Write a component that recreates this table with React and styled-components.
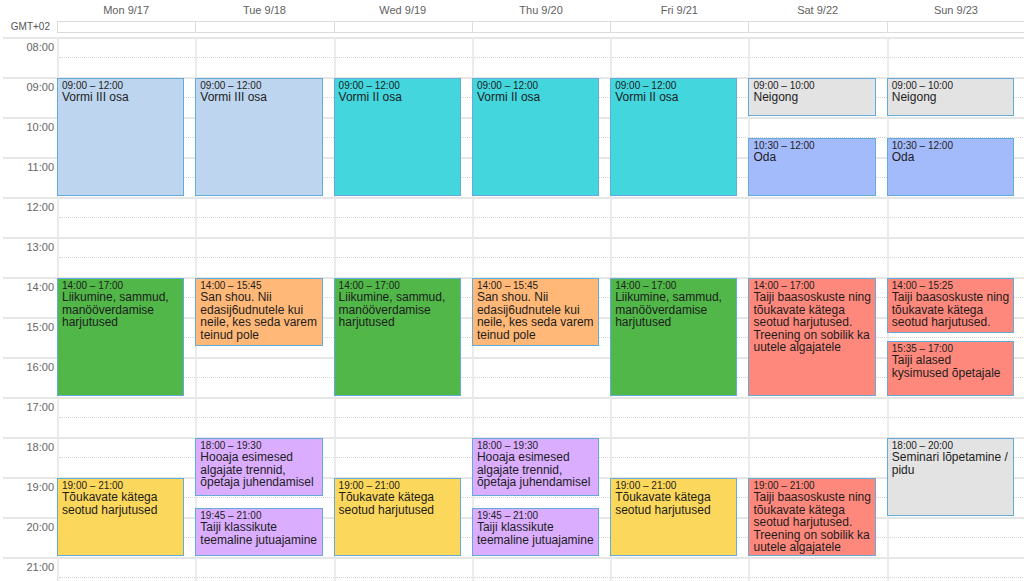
import React from "react";
import styled, { createGlobalStyle } from "styled-components";

const GlobalStyle = createGlobalStyle`
  html, body { margin: 0; padding: 0; background: #fff; overflow: hidden; }
  body { font-family: "Liberation Sans", Arial, sans-serif; color: #222; }
  * { box-sizing: border-box; }
`;

const COLS = "54px repeat(7, 138.3px)";

const Calendar = styled.div`
  width: 1025px;
  padding-left: 3px;
`;

const HeaderRow = styled.div`
  display: grid;
  grid-template-columns: ${COLS};
  height: 21px;
  align-items: center;
`;

const DayLabel = styled.div`
  text-align: center;
  font-size: 11px;
  color: #5f5f5f;
  padding-bottom: 2px;
`;

const AllDayRow = styled.div`
  display: grid;
  grid-template-columns: ${COLS};
  height: 16px;
`;

const ZoneLabel = styled.div`
  font-size: 10px;
  color: #555;
  text-align: right;
  padding-right: 7px;
  line-height: 12px;
`;

const AllDayCell = styled.div`
  height: 12px;
  border-top: 1px solid #dcdcdc;
  border-bottom: 1px solid #dcdcdc;
  border-left: 1px solid #dcdcdc;
`;

const Body = styled.div`
  display: grid;
  grid-template-columns: ${COLS};
`;

const Gutter = styled.div`
  display: flex;
  flex-direction: column;
`;

const HourLabel = styled.div`
  height: 40px;
  border-top: 2px solid #e6e6e6;
  font-size: 11px;
  color: #666;
  text-align: right;
  padding: 2px 3px 0 0;
  line-height: 13px;
`;

const DayColumn = styled.div`
  position: relative;
  display: flex;
  flex-direction: column;
`;

const Slot = styled.div`
  height: 40px;
  border-top: 2px solid #e6e6e6;
  border-left: 2px solid #ebebeb;
`;

const HalfLine = styled.div`
  height: 19px;
  border-bottom: 1px dotted #d4d4d4;
`;

const Event = styled.div`
  position: absolute;
  left: 0;
  width: 92%;
  background: ${(p) => p.$bg};
  border: 1px solid #63acd9;
  padding: 2px 3px 0 4px;
  overflow: hidden;
  color: #1d1d1d;
`;

const EventTime = styled.div`
  font-size: 10px;
  line-height: 10px;
`;

const EventTitle = styled.div`
  font-size: 12px;
  line-height: 12.5px;
`;

const C = {
  lightblue: "#bdd5ee",
  cyan: "#44d6dd",
  gray: "#e3e3e3",
  peri: "#a4bbfb",
  green: "#51b749",
  orange: "#ffb878",
  salmon: "#ff887c",
  purple: "#dbadff",
  yellow: "#fbd75b",
};

const LIIK = "Liikumine, sammud, manööverdamise harjutused";
const TOUK = "Tõukavate kätega seotud harjutused";
const SAN = "San shou. Nii edasij6udnutele kui neile, kes seda varem teinud pole";
const HOO = "Hooaja esimesed algajate trennid, õpetaja juhendamisel";
const KLA = "Taiji klassikute teemaline jutuajamine";
const BAAS = "Taiji baasoskuste ning tõukavate kätega seotud harjutused. Treening on sobilik ka uutele algajatele";

const days = [
  {
    label: "Mon 9/17",
    events: [
      ["09:00", "12:00", "Vormi III osa", C.lightblue],
      ["14:00", "17:00", LIIK, C.green],
      ["19:00", "21:00", TOUK, C.yellow],
    ],
  },
  {
    label: "Tue 9/18",
    events: [
      ["09:00", "12:00", "Vormi III osa", C.lightblue],
      ["14:00", "15:45", SAN, C.orange],
      ["18:00", "19:30", HOO, C.purple],
      ["19:45", "21:00", KLA, C.purple],
    ],
  },
  {
    label: "Wed 9/19",
    events: [
      ["09:00", "12:00", "Vormi II osa", C.cyan],
      ["14:00", "17:00", LIIK, C.green],
      ["19:00", "21:00", TOUK, C.yellow],
    ],
  },
  {
    label: "Thu 9/20",
    events: [
      ["09:00", "12:00", "Vormi II osa", C.cyan],
      ["14:00", "15:45", SAN, C.orange],
      ["18:00", "19:30", HOO, C.purple],
      ["19:45", "21:00", KLA, C.purple],
    ],
  },
  {
    label: "Fri 9/21",
    events: [
      ["09:00", "12:00", "Vormi II osa", C.cyan],
      ["14:00", "17:00", LIIK, C.green],
      ["19:00", "21:00", TOUK, C.yellow],
    ],
  },
  {
    label: "Sat 9/22",
    events: [
      ["09:00", "10:00", "Neigong", C.gray],
      ["10:30", "12:00", "Oda", C.peri],
      ["14:00", "17:00", BAAS, C.salmon],
      ["19:00", "21:00", BAAS, C.salmon],
    ],
  },
  {
    label: "Sun 9/23",
    events: [
      ["09:00", "10:00", "Neigong", C.gray],
      ["10:30", "12:00", "Oda", C.peri],
      ["14:00", "15:25", "Taiji baasoskuste ning tõukavate kätega seotud harjutused.", C.salmon],
      ["15:35", "17:00", "Taiji alased kysimused õpetajale", C.salmon],
      ["18:00", "20:00", "Seminari lõpetamine / pidu", C.gray],
    ],
  },
];

const hours = Array.from({ length: 14 }, (_, i) => i + 8);
const pad = (n) => String(n).padStart(2, "0");
const toMin = (t) => {
  const [h, m] = t.split(":").map(Number);
  return h * 60 + m - 8 * 60;
};

export default function App() {
  return (
    <>
      <GlobalStyle />
      <Calendar>
        <HeaderRow>
          <div />
          {days.map((d) => (
            <DayLabel key={d.label}>{d.label}</DayLabel>
          ))}
        </HeaderRow>
        <AllDayRow>
          <ZoneLabel>GMT+02</ZoneLabel>
          {days.map((d) => (
            <AllDayCell key={d.label} />
          ))}
        </AllDayRow>
        <Body>
          <Gutter>
            {hours.map((h) => (
              <HourLabel key={h}>{pad(h)}:00</HourLabel>
            ))}
          </Gutter>
          {days.map((d) => (
            <DayColumn key={d.label}>
              {hours.map((h) => (
                <Slot key={h}>
                  <HalfLine />
                </Slot>
              ))}
              {d.events.map(([s, e, title, bg], i) => {
                const top = (toMin(s) * 2) / 3 + 1;
                const height = ((toMin(e) - toMin(s)) * 2) / 3 - 2;
                return (
                  <Event key={i} $bg={bg} style={{ top, height }}>
                    <EventTime>
                      {s} – {e}
                    </EventTime>
                    <EventTitle>{title}</EventTitle>
                  </Event>
                );
              })}
            </DayColumn>
          ))}
        </Body>
      </Calendar>
    </>
  );
}
